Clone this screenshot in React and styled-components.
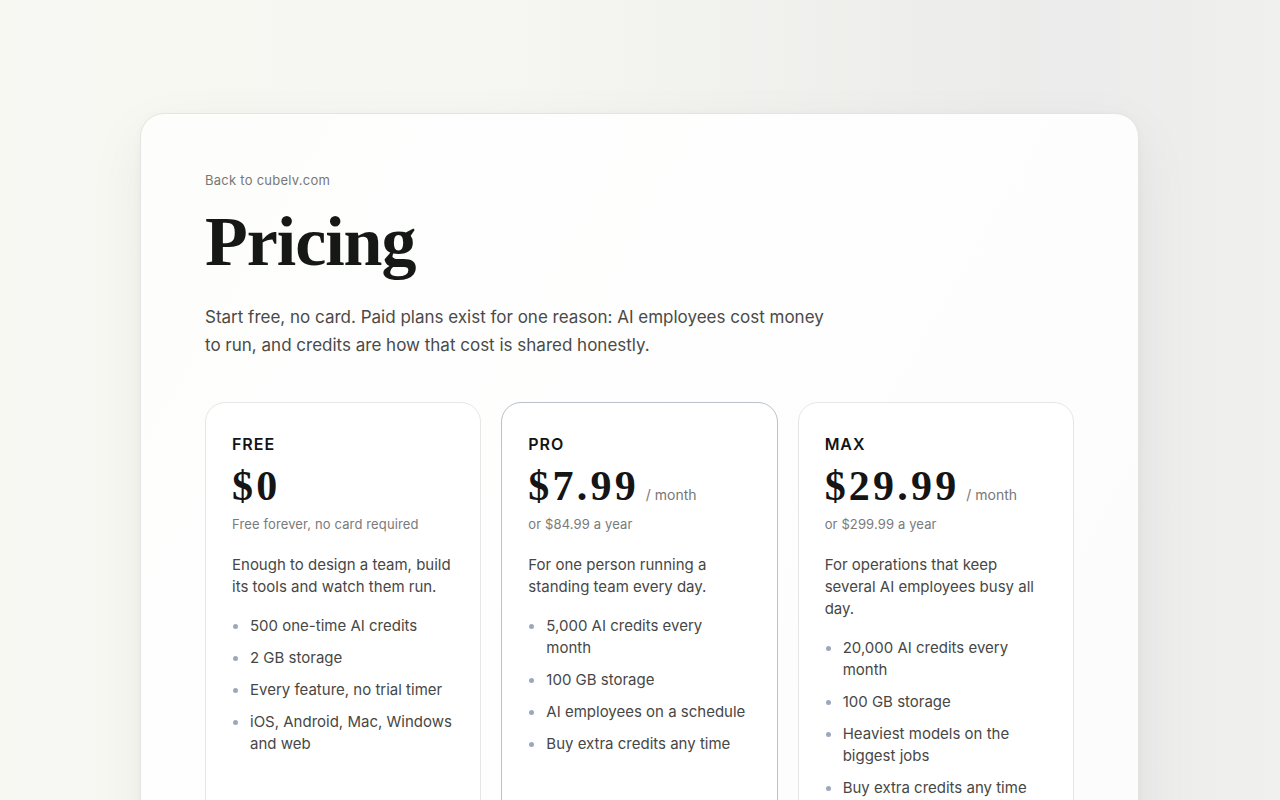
import React from 'react';
import styled, { createGlobalStyle } from 'styled-components';

const plans = [
  {
    name: 'FREE',
    price: '$0',
    note: 'Free forever, no card required',
    text: 'Enough to design a team, build its tools and watch them run.',
    items: ['500 one-time AI credits', '2 GB storage', 'Every feature, no trial timer', 'iOS, Android, Mac, Windows and web'],
    cta: 'Start free',
  },
  {
    name: 'PRO',
    price: '$7.99',
    per: '/ month',
    note: 'or $84.99 a year',
    text: 'For one person running a standing team every day.',
    items: ['5,000 AI credits every month', '100 GB storage', 'AI employees on a schedule', 'Buy extra credits any time'],
    cta: 'Get Pro',
    featured: true,
  },
  {
    name: 'MAX',
    price: '$29.99',
    per: '/ month',
    note: 'or $299.99 a year',
    text: 'For operations that keep several AI employees busy all day.',
    items: ['20,000 AI credits every month', '100 GB storage', 'Heaviest models on the biggest jobs', 'Buy extra credits any time'],
    cta: 'Get Max',
  },
];

const App = () => {
  return (
    <>
      <GlobalStyle />
      <Page>
        <Sheet>
          <BackLink href="#">Back to cubelv.com</BackLink>
          <Title>Pricing</Title>
          <Lead>
            Start free, no card. Paid plans exist for one reason: AI employees cost money
            to run, and credits are how that cost is shared honestly.
          </Lead>
          <Plans>
            {plans.map((plan) => (
              <Plan key={plan.name} featured={plan.featured}>
                <PlanName>{plan.name}</PlanName>
                <PriceRow>
                  <Price>{plan.price}</Price>
                  {plan.per && <Per>{plan.per}</Per>}
                </PriceRow>
                <Note>{plan.note}</Note>
                <Desc>{plan.text}</Desc>
                <Features>
                  {plan.items.map((item) => (
                    <Feature key={item}>{item}</Feature>
                  ))}
                </Features>
                <Cta featured={plan.featured}>{plan.cta}</Cta>
              </Plan>
            ))}
          </Plans>
        </Sheet>
      </Page>
    </>
  );
};
export default App;

const GlobalStyle = createGlobalStyle`
  * { box-sizing: border-box; }
  html, body {
    margin: 0;
    padding: 0;
  }
  body {
    font-family: Inter, "Noto Sans", sans-serif;
    color: #1a1a1a;
    background: linear-gradient(90deg, #f8f8f3 0%, #f6f6f2 38%, #eeeeec 70%, #ebeceb 85%, #f0f0ee 100%);
    min-height: 100vh;
  }
`;

const Page = styled.div`
  min-height: 100vh;
  padding: 113px 0 80px;
  display: flex;
  justify-content: center;
`;

const Sheet = styled.main`
  width: 999px;
  margin-right: 1px;
  padding: 57px 64px 64px;
  background: linear-gradient(120deg, #fdfdfc 0%, #fefefe 40%, #fcfcfc 100%);
  border: 1px solid #e4e4e2;
  border-radius: 24px;
  box-shadow: 0 20px 60px rgba(40, 40, 30, 0.06), 0 2px 10px rgba(40, 40, 30, 0.03);
`;

const BackLink = styled.a`
  display: block;
  font-size: 13px;
  line-height: 18px;
  color: #777;
  letter-spacing: 0.02em;
  text-decoration: none;
`;

const Title = styled.h1`
  margin: 13px 0 0;
  font-family: "Liberation Serif", "DejaVu Serif", serif;
  font-weight: 700;
  font-size: 70px;
  line-height: 80px;
  letter-spacing: -0.015em;
  color: #161815;
`;

const Lead = styled.p`
  margin: 21px 0 0;
  max-width: 630px;
  font-size: 17px;
  line-height: 28px;
  color: #4a4a48;
`;

const Plans = styled.div`
  margin-top: 43px;
  display: grid;
  grid-template-columns: repeat(3, 1fr);
  gap: 20px;
`;

const Plan = styled.section`
  display: flex;
  flex-direction: column;
  padding: 31px 26px 28px;
  min-height: 540px;
  background: #fff;
  border: 1px solid ${({ featured }) => (featured ? '#b9c1cc' : '#e6e6e4')};
  border-radius: 20px;
`;

const PlanName = styled.div`
  font-size: 16px;
  line-height: 20px;
  font-weight: 600;
  letter-spacing: 0.06em;
  color: #141414;
`;

const PriceRow = styled.div`
  margin-top: 11px;
  display: flex;
  align-items: baseline;
  gap: 7px;
`;

const Price = styled.span`
  font-family: "Liberation Serif", "DejaVu Serif", serif;
  font-weight: 700;
  font-size: 42px;
  line-height: 42px;
  letter-spacing: 3.2px;
  color: #151515;
`;

const Per = styled.span`
  font-size: 14px;
  color: #777;
`;

const Note = styled.div`
  margin-top: 8px;
  font-size: 13px;
  line-height: 18px;
  color: #7a7a7a;
  letter-spacing: 0.01em;
`;

const Desc = styled.p`
  margin: 21px 0 0;
  font-size: 15px;
  line-height: 22px;
  color: #474745;
`;

const Features = styled.ul`
  margin: 17px 0 0;
  padding: 0;
  list-style: none;
  display: flex;
  flex-direction: column;
  gap: 10px;
`;

const Feature = styled.li`
  position: relative;
  padding-left: 18px;
  font-size: 15px;
  line-height: 22px;
  color: #474745;

  &:before {
    content: "";
    position: absolute;
    left: 1px;
    top: 9px;
    width: 5px;
    height: 5px;
    border-radius: 50%;
    background: #9aa9bd;
  }
`;

const Cta = styled.button`
  margin-top: auto;
  height: 44px;
  border-radius: 12px;
  font-family: inherit;
  font-size: 15px;
  font-weight: 500;
  cursor: pointer;
  border: 1px solid ${({ featured }) => (featured ? '#1b1d1a' : '#d9d9d6')};
  background: ${({ featured }) => (featured ? '#1b1d1a' : '#fff')};
  color: ${({ featured }) => (featured ? '#fff' : '#1b1d1a')};
`;
